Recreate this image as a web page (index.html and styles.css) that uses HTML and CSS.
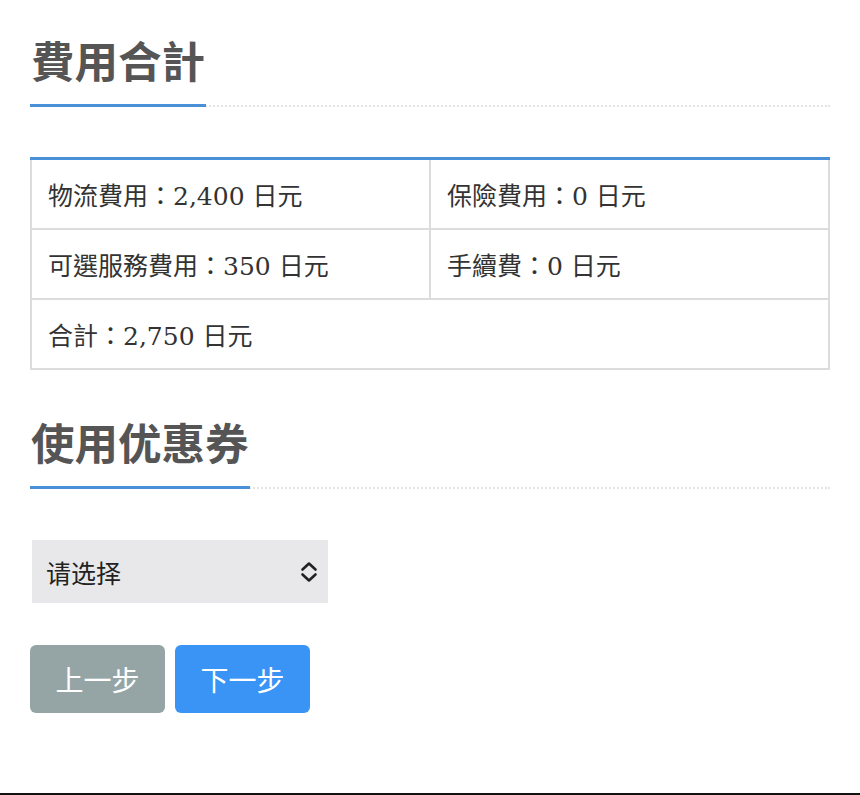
FILE: index.html
```html
<!DOCTYPE html>
<html lang="zh-Hant">
<head>
<meta charset="utf-8">
<title>費用合計</title>
<link rel="stylesheet" href="styles.css">
</head>
<body>
<div class="page">
  <h2 class="section-title"><span class="section-title__text">費用合計</span></h2>

  <table class="fee-table">
    <tr>
      <td>物流費用：2,400 日元</td>
      <td>保險費用：0 日元</td>
    </tr>
    <tr>
      <td>可選服務費用：350 日元</td>
      <td>手續費：0 日元</td>
    </tr>
    <tr>
      <td colspan="2">合計：2,750 日元</td>
    </tr>
  </table>

  <h2 class="section-title section-title--coupon"><span class="section-title__text">使用优惠券</span></h2>

  <div class="select-box">
    <span class="select-box__label">请选择</span>
    <svg class="select-box__icon" width="18" height="22" viewBox="0 0 18 22" aria-hidden="true">
      <path d="M2.5 8.5 L9 2.5 L15.5 8.5 M2.5 13.5 L9 19.5 L15.5 13.5" fill="none" stroke="#222" stroke-width="2.6" stroke-linecap="round" stroke-linejoin="round"/>
    </svg>
  </div>

  <div class="actions">
    <button class="btn btn--prev" type="button">上一步</button>
    <button class="btn btn--next" type="button">下一步</button>
  </div>
</div>
</body>
</html>
```

FILE: styles.css
```css
html, body {
  margin: 0;
  padding: 0;
  background: #fff;
}

.page {
  box-sizing: border-box;
  height: 795px;
  padding: 30px 30px 0 30px;
  border-bottom: 2px solid #111;
  font-family: "DejaVu Serif", "Noto Sans CJK TC", serif;
  color: #333;
}

.section-title {
  margin: 0;
  display: flex;
  border-bottom: 2px dotted #e4e4e4;
  font-family: "Noto Sans CJK TC", "Noto Sans", sans-serif;
  font-size: 43.5px;
  font-weight: 700;
  line-height: 43px;
  color: #555;
}

.section-title__text {
  display: inline-block;
  padding: 8px 1px 23px 1px;
  margin-bottom: -2px;
  border-bottom: 3px solid #4a90d9;
}

.fee-table {
  width: 100%;
  margin-top: 50px;
  border-collapse: collapse;
  border: 2px solid #dcdcdc;
  border-top: 3px solid #4a90d9;
  font-size: 25px;
}

.fee-table td {
  width: 50%;
  height: 68px;
  padding: 0 16px;
  border: 2px solid #dcdcdc;
  color: #333;
  vertical-align: middle;
}

.fee-table tr:first-child td {
  border-top: none;
}

.section-title--coupon {
  margin-top: 42px;
}

.select-box {
  box-sizing: border-box;
  width: 296px;
  height: 63px;
  margin: 51px 0 0 2px;
  padding: 0 10px 0 14px;
  display: flex;
  align-items: center;
  justify-content: space-between;
  background: #e8e8eb;
  font-family: "Noto Sans CJK SC", "Noto Sans", sans-serif;
  font-size: 25px;
  color: #222;
}

.select-box__icon {
  display: block;
}

.actions {
  display: flex;
  gap: 10px;
  margin-top: 42px;
}

.btn {
  width: 135px;
  height: 68px;
  border: none;
  border-radius: 6px;
  color: #fff;
  font-family: "Liberation Serif", "Noto Sans CJK TC", serif;
  font-size: 28px;
  cursor: pointer;
}

.btn--prev {
  background: #95a5a6;
}

.btn--next {
  background: #3a94f6;
}
```
